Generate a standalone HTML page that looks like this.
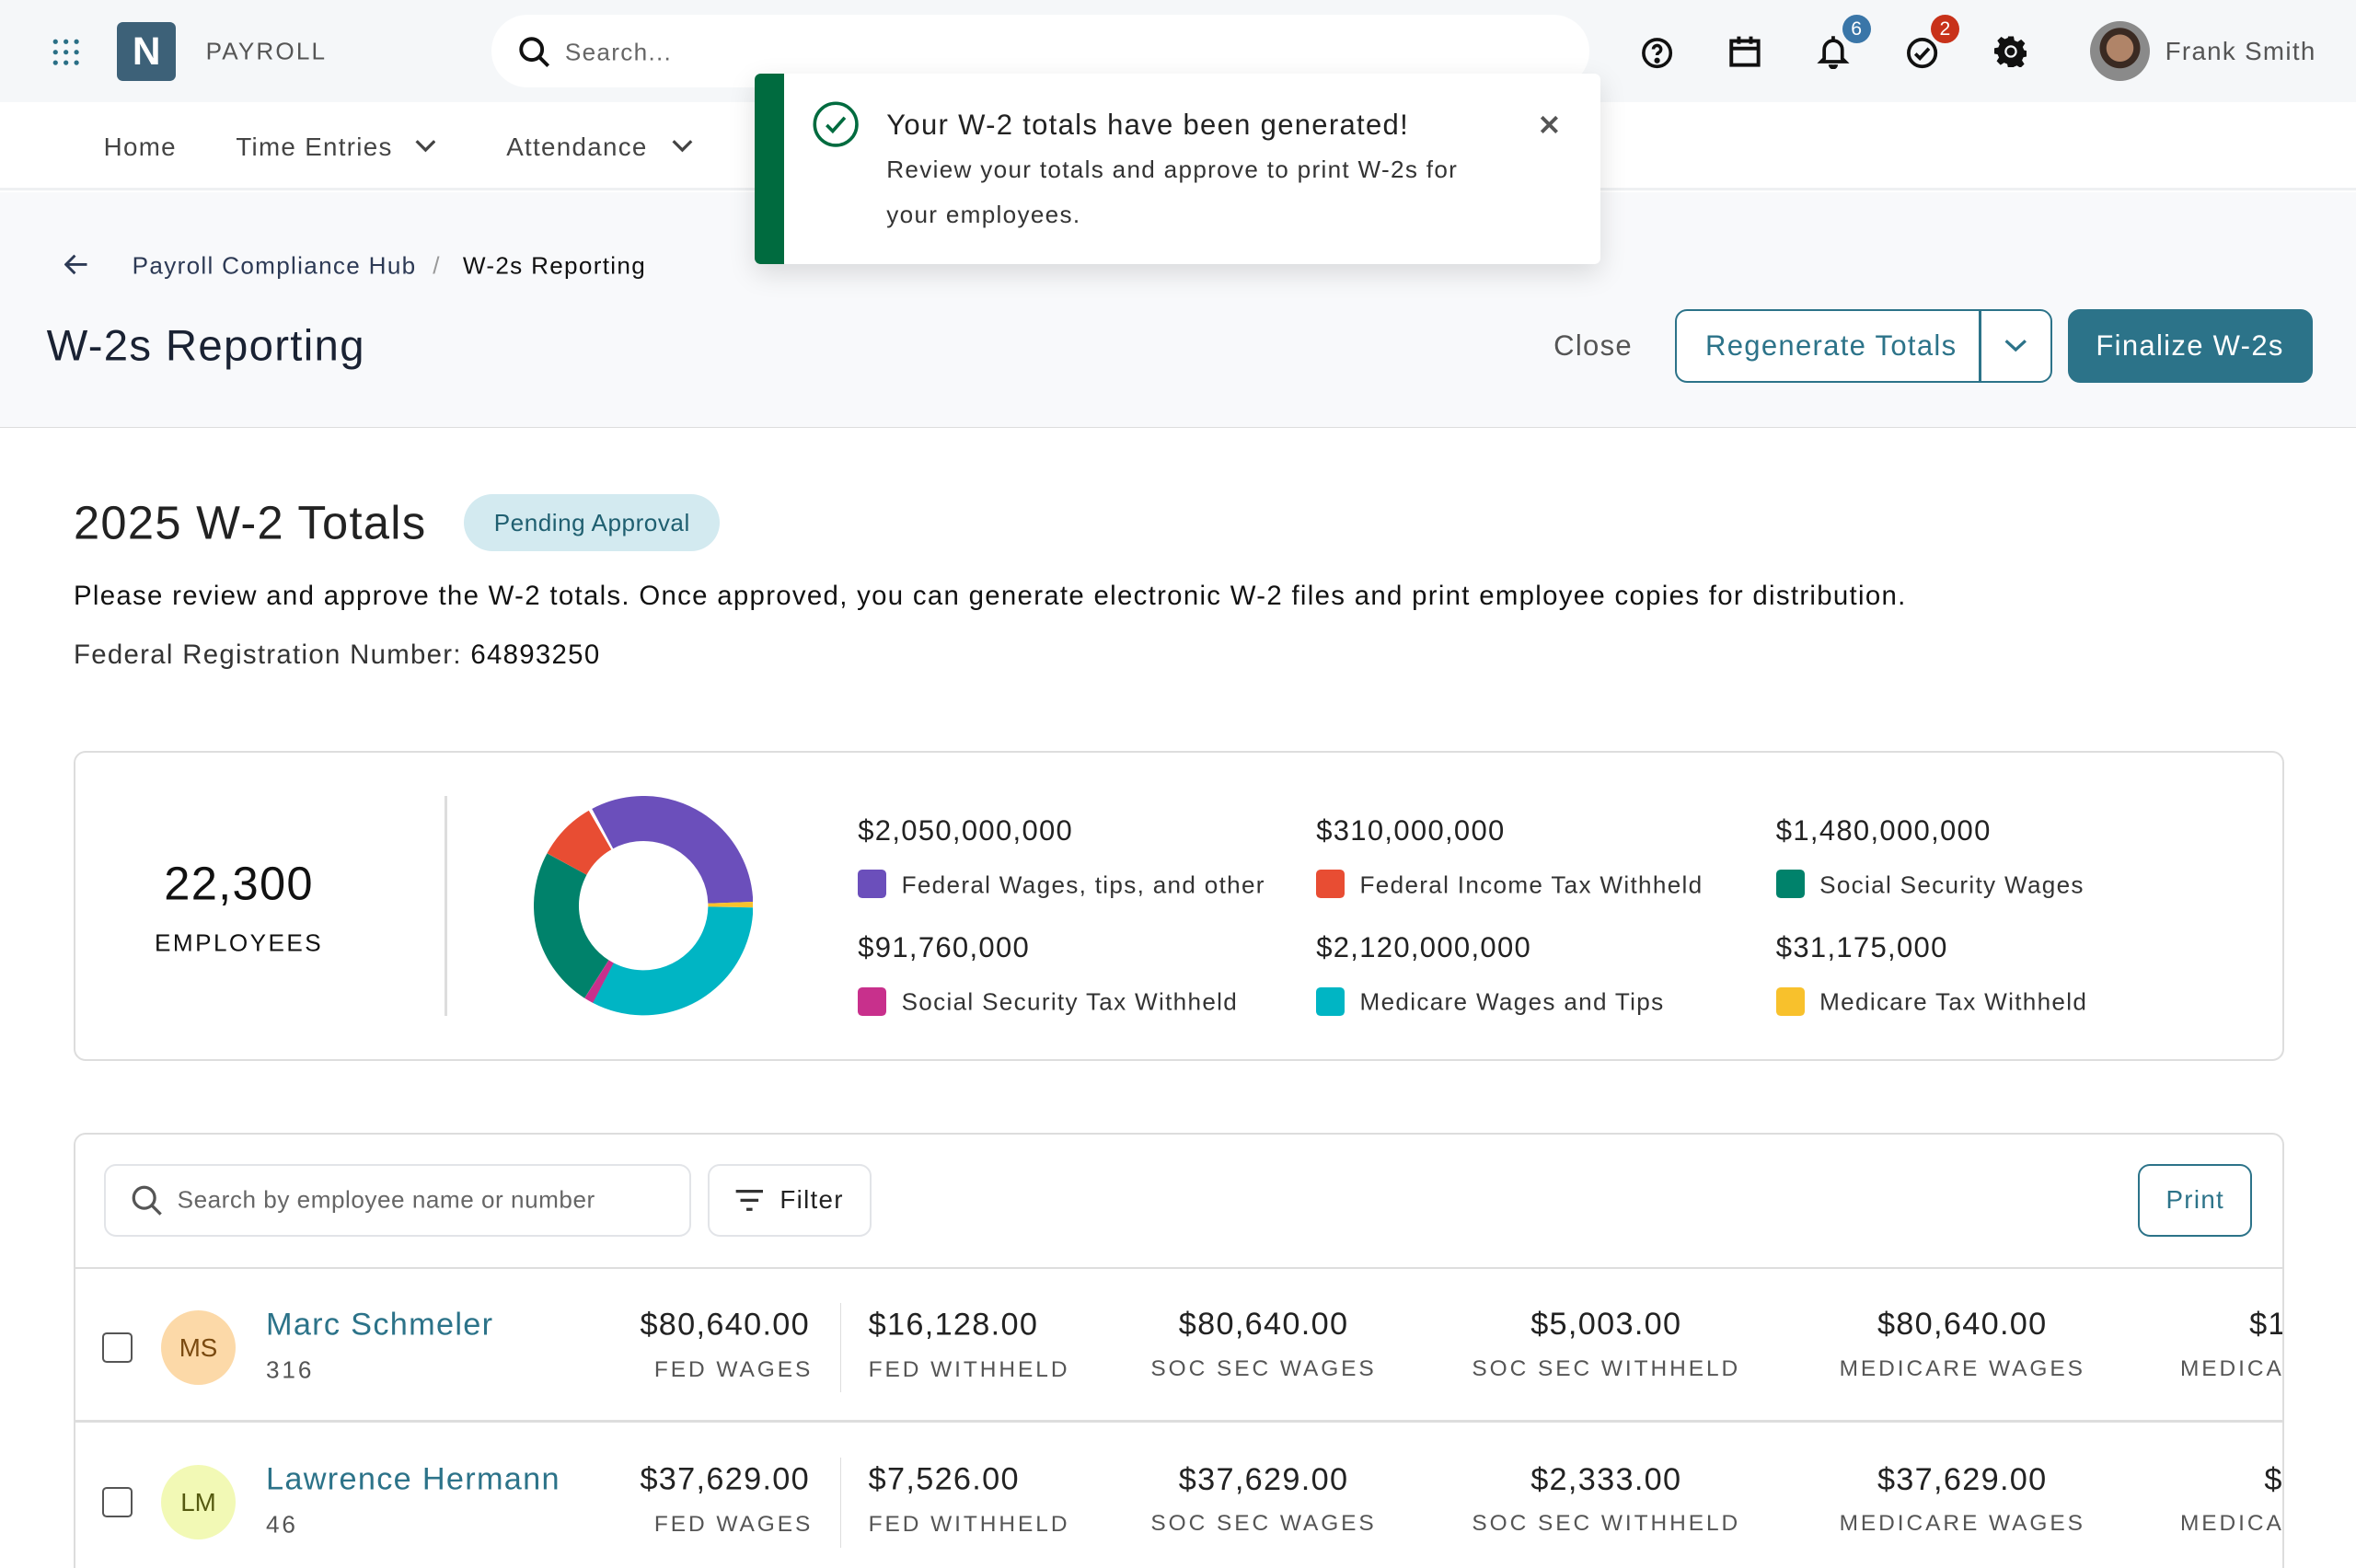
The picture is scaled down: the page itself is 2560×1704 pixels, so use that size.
<!DOCTYPE html>
<html><head><meta charset="utf-8"><style>
*{margin:0;padding:0;box-sizing:border-box}
html,body{width:2560px;height:1704px;overflow:hidden;background:#fff}
#r{zoom:1.63265;width:1568px;height:1044px;position:relative;font-family:"Liberation Sans",sans-serif;color:#222;overflow:hidden;letter-spacing:.05em}
.a{position:absolute;white-space:nowrap}
.vc{transform:translateY(-50%)}
.amt{font-size:21px;color:#222}
.lbl{font-size:15px;color:#555;letter-spacing:1.8px}
</style></head><body><div id="r">
<!-- top bar -->
<div class="a" style="left:0;top:0;width:1568px;height:68px;background:#f5f7f9"></div>
<svg class="a" style="left:35px;top:26px" width="18" height="18" viewBox="0 0 18 18" fill="#2a6f86"><circle cx="2" cy="2" r="1.6"/><circle cx="9" cy="2" r="1.6"/><circle cx="16" cy="2" r="1.6"/><circle cx="2" cy="9" r="1.6"/><circle cx="9" cy="9" r="1.6"/><circle cx="16" cy="9" r="1.6"/><circle cx="2" cy="16" r="1.6"/><circle cx="9" cy="16" r="1.6"/><circle cx="16" cy="16" r="1.6"/></svg>
<div class="a" style="left:78px;top:15px;width:39px;height:39px;background:#3d6178;border-radius:4px;color:#fff;font-size:26px;font-weight:bold;text-align:center;line-height:39px;letter-spacing:0">N</div>
<div class="a vc" style="left:137px;top:34px;font-size:16px;color:#555;letter-spacing:1.3px">PAYROLL</div>
<div class="a" style="left:327px;top:10px;width:731px;height:48px;background:#fff;border-radius:24px"></div>
<svg class="a" style="left:345px;top:24px" width="22" height="22" viewBox="0 0 22 22" fill="none" stroke="#111" stroke-width="2.4"><circle cx="9" cy="9" r="7"/><path d="M14 14l6 6"/></svg>
<div class="a vc" style="left:376px;top:35px;font-size:16px;color:#666">Search...</div>
<svg class="a" style="left:1091px;top:23px" width="24" height="24" viewBox="0 0 24 24" fill="none" stroke="#111" stroke-width="2.2"><circle cx="12" cy="12" r="9"/><path d="M9.5 9.5a2.5 2.5 0 1 1 3.5 2.3c-.7.4-1 .9-1 1.7"/><circle cx="12" cy="17" r=".8" fill="#111"/></svg>
<svg class="a" style="left:1150px;top:23px" width="22" height="22" viewBox="0 0 22 22" fill="none" stroke="#111" stroke-width="2.4"><rect x="2" y="4" width="18" height="16"/><path d="M2 9h18M7 1v5M15 1v5"/></svg>
<svg class="a" style="left:1209px;top:22px" width="22" height="24" viewBox="0 0 22 24" fill="none" stroke="#111" stroke-width="2.3"><path d="M11 2v2M5 17V11a6 6 0 0 1 12 0v6l2 2H3z"/><path d="M9 21a2 2 0 0 0 4 0" fill="#111"/></svg>
<div class="a" style="left:1226px;top:10px;width:19px;height:19px;border-radius:50%;background:#3a76a8;color:#fff;font-size:13px;text-align:center;line-height:19px;letter-spacing:0">6</div>
<svg class="a" style="left:1267px;top:23px" width="24" height="24" viewBox="0 0 24 24" fill="none" stroke="#111" stroke-width="2.3"><circle cx="12" cy="12" r="9"/><path d="M7.5 12.5l3 3 6-6.5"/></svg>
<div class="a" style="left:1285px;top:10px;width:19px;height:19px;border-radius:50%;background:#c8321a;color:#fff;font-size:13px;text-align:center;line-height:19px;letter-spacing:0">2</div>
<svg class="a" style="left:1327px;top:23px" width="22" height="22" viewBox="0 0 24 24" fill="#111"><path d="M10 1h4l.6 3 2.3 1 2.6-1.7 2.8 2.8L20.6 8.7l1 2.3 2.4.6v4l-2.9.6-1 2.3 1.7 2.6-2.8 2.8-2.6-1.7-2.3 1L14 24h-4l-.6-2.9-2.3-1-2.6 1.7-2.8-2.8 1.7-2.6-1-2.3L0 13.6v-4l2.9-.6 1-2.3L2.2 4.1 5 1.3 7.6 3l2.3-1z"/><circle cx="12" cy="12" r="4.5" fill="#f5f7f9"/><circle cx="12" cy="12" r="3" fill="#111"/></svg>
<div class="a" style="left:1391px;top:14px;width:40px;height:40px;border-radius:50%;background:radial-gradient(circle at 50% 45%,#b08468 0 30%,#3a2a22 31% 45%,#8a8a8a 46%)"></div>
<div class="a vc" style="left:1441px;top:34px;font-size:17px;color:#555">Frank Smith</div>
<!-- nav -->
<div class="a" style="left:0;top:68px;width:1568px;height:59px;background:#fff;border-bottom:2px solid #eef0f2"></div>
<div class="a vc" style="left:69px;top:98px;font-size:17px;color:#444">Home</div>
<div class="a vc" style="left:157px;top:98px;font-size:17px;color:#444">Time Entries</div>
<svg class="a" style="left:276px;top:92px" width="14" height="10" viewBox="0 0 14 10" fill="none" stroke="#444" stroke-width="2"><path d="M1 2l6 6 6-6"/></svg>
<div class="a vc" style="left:337px;top:98px;font-size:17px;color:#444">Attendance</div>
<svg class="a" style="left:447px;top:92px" width="14" height="10" viewBox="0 0 14 10" fill="none" stroke="#444" stroke-width="2"><path d="M1 2l6 6 6-6"/></svg>
<!-- page header -->
<div class="a" style="left:0;top:128px;width:1568px;height:157px;background:#f8f9fb;border-bottom:1px solid #ddd"></div>
<svg class="a" style="left:43px;top:169px" width="16" height="14" viewBox="0 0 16 14" fill="none" stroke="#2d3a55" stroke-width="1.8"><path d="M15 7H2M7 1L1 7l6 6"/></svg>
<div class="a vc" style="left:88px;top:177px;font-size:16px;color:#2d3a55">Payroll Compliance Hub</div>
<div class="a vc" style="left:288px;top:177px;font-size:16px;color:#999">/</div>
<div class="a vc" style="left:308px;top:177px;font-size:16px;color:#111">W-2s Reporting</div>
<div class="a vc" style="left:31px;top:230px;font-size:29px;color:#1a2233">W-2s Reporting</div>
<div class="a vc" style="left:1034px;top:230px;font-size:19px;color:#555">Close</div>
<div class="a" style="left:1115px;top:206px;width:251px;height:49px;border:1.5px solid #2c7389;border-radius:8px;background:#fff"></div>
<div class="a" style="left:1317px;top:207px;width:1.5px;height:47px;background:#2c7389"></div>
<div class="a vc" style="left:1135px;top:230px;font-size:19px;color:#2c7389">Regenerate Totals</div>
<svg class="a" style="left:1334px;top:225px" width="15" height="10" viewBox="0 0 15 10" fill="none" stroke="#2c7389" stroke-width="2"><path d="M1 2l6.5 6 6.5-6"/></svg>
<div class="a" style="left:1376px;top:206px;width:163px;height:49px;background:#2c7389;border-radius:8px;color:#fff;font-size:19px;text-align:center;line-height:49px">Finalize W-2s</div>
<!-- toast -->
<div class="a" style="left:502px;top:49px;width:563px;height:127px;background:#fff;border-radius:4px;box-shadow:0 6px 18px rgba(0,0,0,.13);overflow:hidden"><div style="width:20px;height:127px;background:#006b3f"></div></div>
<svg class="a" style="left:540px;top:67px" width="32" height="32" viewBox="0 0 32 32" fill="none" stroke="#006b3f" stroke-width="2.2"><circle cx="16" cy="16" r="14"/><path d="M10 16.5l4 4 8-9"/></svg>
<div class="a vc" style="left:590px;top:83px;font-size:19px;color:#222">Your W-2 totals have been generated!</div>
<div class="a" style="left:590px;top:98px;font-size:16px;line-height:30px;color:#333">Review your totals and approve to print W-2s for<br>your employees.</div>
<svg class="a" style="left:1024px;top:76px" width="14" height="14" viewBox="0 0 14 14" stroke="#555" stroke-width="2.4"><path d="M2 2l10 10M12 2L2 12"/></svg>
<!-- totals -->
<div class="a vc" style="left:49px;top:348px;font-size:31px;color:#222">2025 W-2 Totals</div>
<div class="a" style="left:309px;top:329px;width:170px;height:38px;background:#d3eaf0;border-radius:19px;color:#1f5f70;font-size:16px;text-align:center;line-height:38px;letter-spacing:.02em">Pending Approval</div>
<div class="a vc" style="left:49px;top:397px;font-size:18px;color:#111">Please review and approve the W-2 totals. Once approved, you can generate electronic W-2 files and print employee copies for distribution.</div>
<div class="a vc" style="left:49px;top:436px;font-size:18px;color:#333">Federal Registration Number: <span style="color:#111">64893250</span></div>
<div class="a" style="left:49px;top:500px;width:1471px;height:206px;border:1.5px solid #ddd;border-radius:8px"></div>
<div class="a vc" style="left:59px;width:200px;text-align:center;top:588px;font-size:31px;color:#111">22,300</div>
<div class="a vc" style="left:59px;width:200px;text-align:center;top:628px;font-size:16px;color:#111;letter-spacing:1.5px">EMPLOYEES</div>
<div class="a" style="left:296px;top:530px;width:1.5px;height:146px;background:#ddd"></div>
<svg class="a" style="left:355px;top:530px" width="146" height="146" viewBox="-73 -73 146 146">
<g fill="none" stroke-width="30">
<circle r="58" stroke="#6b4fbb" stroke-dasharray="117.4 400" transform="rotate(-118)"/>
<circle r="58" stroke="#f8c12c" stroke-dasharray="3 400" transform="rotate(-2)"/>
<circle r="58" stroke="#00b5c4" stroke-dasharray="118 400" transform="rotate(1)"/>
<circle r="58" stroke="#c8308c" stroke-dasharray="5 400" transform="rotate(117.5)"/>
<circle r="58" stroke="#00826b" stroke-dasharray="87 400" transform="rotate(122.5)"/>
<circle r="58" stroke="#e84d33" stroke-dasharray="32 400" transform="rotate(208.5)"/>
</g></svg>
<div class="a vc amt" style="left:571px;top:553px;font-size:19px">$2,050,000,000</div>
<div class="a vc amt" style="left:876px;top:553px;font-size:19px">$310,000,000</div>
<div class="a vc amt" style="left:1182px;top:553px;font-size:19px">$1,480,000,000</div>
<div class="a vc amt" style="left:571px;top:631px;font-size:19px">$91,760,000</div>
<div class="a vc amt" style="left:876px;top:631px;font-size:19px">$2,120,000,000</div>
<div class="a vc amt" style="left:1182px;top:631px;font-size:19px">$31,175,000</div>
<div class="a" style="left:571px;top:579px;width:19px;height:19px;border-radius:3px;background:#6b4fbb"></div>
<div class="a" style="left:876px;top:579px;width:19px;height:19px;border-radius:3px;background:#e84d33"></div>
<div class="a" style="left:1182px;top:579px;width:19px;height:19px;border-radius:3px;background:#00826b"></div>
<div class="a" style="left:571px;top:657px;width:19px;height:19px;border-radius:3px;background:#c8308c"></div>
<div class="a" style="left:876px;top:657px;width:19px;height:19px;border-radius:3px;background:#00b5c4"></div>
<div class="a" style="left:1182px;top:657px;width:19px;height:19px;border-radius:3px;background:#f8c12c"></div>
<div class="a vc" style="left:600px;top:589px;font-size:16px;color:#333">Federal Wages, tips, and other</div>
<div class="a vc" style="left:905px;top:589px;font-size:16px;color:#333">Federal Income Tax Withheld</div>
<div class="a vc" style="left:1211px;top:589px;font-size:16px;color:#333">Social Security Wages</div>
<div class="a vc" style="left:600px;top:667px;font-size:16px;color:#333">Social Security Tax Withheld</div>
<div class="a vc" style="left:905px;top:667px;font-size:16px;color:#333">Medicare Wages and Tips</div>
<div class="a vc" style="left:1211px;top:667px;font-size:16px;color:#333">Medicare Tax Withheld</div>
<!-- table -->
<div class="a" style="left:49px;top:754px;width:1471px;height:320px;border:1.5px solid #ddd;border-radius:8px;overflow:hidden">
<div style="position:absolute;left:0;top:88px;width:100%;height:1.5px;background:#ddd"></div>
<div style="position:absolute;left:0;top:190px;width:100%;height:1.5px;background:#ddd"></div>
</div>
<div class="a" style="left:69px;top:775px;width:391px;height:48px;border:1.5px solid #e2e4e8;border-radius:8px"></div>
<svg class="a" style="left:87px;top:788px" width="22" height="22" viewBox="0 0 22 22" fill="none" stroke="#555" stroke-width="2"><circle cx="9" cy="9" r="7"/><path d="M14 14l6 6"/></svg>
<div class="a vc" style="left:118px;top:799px;font-size:16px;color:#666;letter-spacing:.02em">Search by employee name or number</div>
<div class="a" style="left:471px;top:775px;width:109px;height:48px;border:1.5px solid #e2e4e8;border-radius:8px"></div>
<svg class="a" style="left:489px;top:792px" width="20" height="14" viewBox="0 0 20 14" stroke="#333" stroke-width="2"><path d="M1 1h18M4 7h12M8 13h4"/></svg>
<div class="a vc" style="left:519px;top:799px;font-size:17px;color:#222">Filter</div>
<div class="a" style="left:1423px;top:775px;width:76px;height:48px;border:1.5px solid #2c7389;border-radius:8px;color:#2c7389;font-size:17px;text-align:center;line-height:45px">Print</div>
<div class="a" style="left:0;top:0;width:1519px;height:1044px;overflow:hidden;pointer-events:none">
<!-- row 1 -->
<div class="a" style="left:68px;top:887px;width:20px;height:20px;border:1.5px solid #555;border-radius:3px"></div>
<div class="a" style="left:107px;top:872px;width:50px;height:50px;border-radius:50%;background:#fcd9a8;color:#7a4a10;font-size:17px;text-align:center;line-height:50px;letter-spacing:0">MS</div>
<div class="a vc" style="left:177px;top:882px;font-size:21px;color:#2c7389">Marc Schmeler</div>
<div class="a vc lbl" style="left:177px;top:912px;font-size:16px">316</div>
<div class="a" style="left:559px;top:867px;width:1px;height:60px;background:#ddd"></div>
<div class="a vc amt" style="right:980px;top:882px">$80,640.00</div><div class="a vc lbl" style="right:978px;top:912px">FED WAGES</div>
<div class="a vc amt" style="left:578px;top:882px">$16,128.00</div><div class="a vc lbl" style="left:578px;top:912px">FED WITHHELD</div>
<div class="a amt" style="left:741px;width:200px;text-align:center;top:870px">$80,640.00</div><div class="a lbl" style="left:741px;width:200px;text-align:center;top:903px">SOC SEC WAGES</div>
<div class="a amt" style="left:969px;width:200px;text-align:center;top:870px">$5,003.00</div><div class="a lbl" style="left:969px;width:200px;text-align:center;top:903px">SOC SEC WITHHELD</div>
<div class="a amt" style="left:1206px;width:200px;text-align:center;top:870px">$80,640.00</div><div class="a lbl" style="left:1206px;width:200px;text-align:center;top:903px">MEDICARE WAGES</div>
<div class="a amt" style="left:1497px;top:870px">$16,128.00</div><div class="a lbl" style="left:1451px;top:903px">MEDICARE WITHHELD</div>
<!-- row 2 -->
<div class="a" style="left:68px;top:990px;width:20px;height:20px;border:1.5px solid #555;border-radius:3px"></div>
<div class="a" style="left:107px;top:975px;width:50px;height:50px;border-radius:50%;background:#f2f9b5;color:#555a10;font-size:17px;text-align:center;line-height:50px;letter-spacing:0">LM</div>
<div class="a vc" style="left:177px;top:985px;font-size:21px;color:#2c7389">Lawrence Hermann</div>
<div class="a vc lbl" style="left:177px;top:1015px;font-size:16px">46</div>
<div class="a" style="left:559px;top:970px;width:1px;height:60px;background:#ddd"></div>
<div class="a vc amt" style="right:980px;top:985px">$37,629.00</div><div class="a vc lbl" style="right:978px;top:1015px">FED WAGES</div>
<div class="a vc amt" style="left:578px;top:985px">$7,526.00</div><div class="a vc lbl" style="left:578px;top:1015px">FED WITHHELD</div>
<div class="a amt" style="left:741px;width:200px;text-align:center;top:973px">$37,629.00</div><div class="a lbl" style="left:741px;width:200px;text-align:center;top:1006px">SOC SEC WAGES</div>
<div class="a amt" style="left:969px;width:200px;text-align:center;top:973px">$2,333.00</div><div class="a lbl" style="left:969px;width:200px;text-align:center;top:1006px">SOC SEC WITHHELD</div>
<div class="a amt" style="left:1206px;width:200px;text-align:center;top:973px">$37,629.00</div><div class="a lbl" style="left:1206px;width:200px;text-align:center;top:1006px">MEDICARE WAGES</div>
<div class="a amt" style="left:1507px;top:973px">$7,526.00</div><div class="a lbl" style="left:1451px;top:1006px">MEDICARE WITHHELD</div>
</div>
</div></body></html>
